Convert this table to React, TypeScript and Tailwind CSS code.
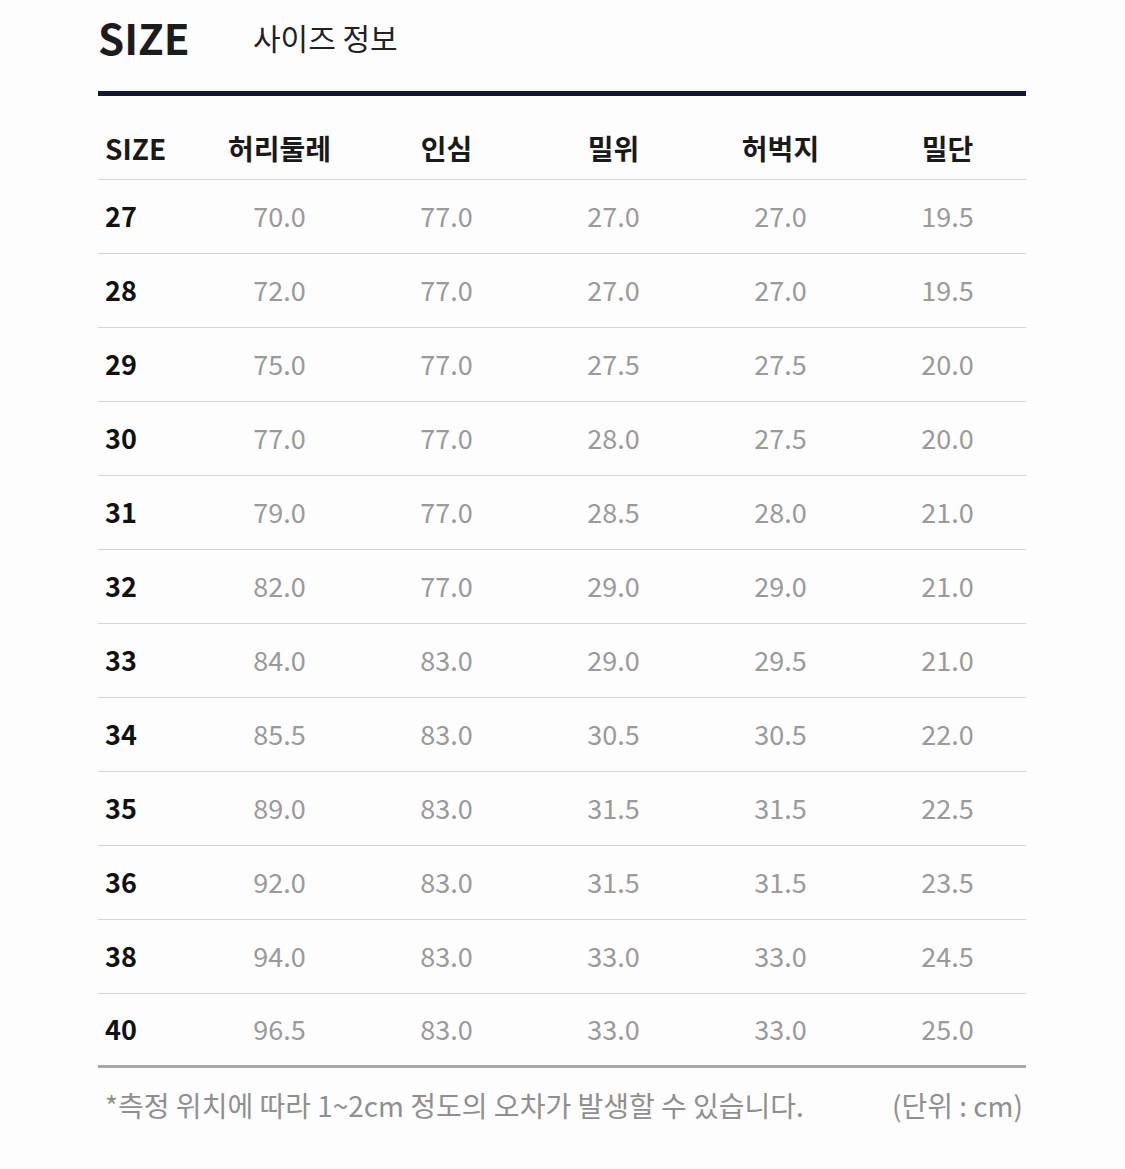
const headers = ["허리둘레", "인심", "밀위", "허벅지", "밀단"];

const rows: [string, string[]][] = [
  ["27", ["70.0", "77.0", "27.0", "27.0", "19.5"]],
  ["28", ["72.0", "77.0", "27.0", "27.0", "19.5"]],
  ["29", ["75.0", "77.0", "27.5", "27.5", "20.0"]],
  ["30", ["77.0", "77.0", "28.0", "27.5", "20.0"]],
  ["31", ["79.0", "77.0", "28.5", "28.0", "21.0"]],
  ["32", ["82.0", "77.0", "29.0", "29.0", "21.0"]],
  ["33", ["84.0", "83.0", "29.0", "29.5", "21.0"]],
  ["34", ["85.5", "83.0", "30.5", "30.5", "22.0"]],
  ["35", ["89.0", "83.0", "31.5", "31.5", "22.5"]],
  ["36", ["92.0", "83.0", "31.5", "31.5", "23.5"]],
  ["38", ["94.0", "83.0", "33.0", "33.0", "24.5"]],
  ["40", ["96.5", "83.0", "33.0", "33.0", "25.0"]],
];

const font = { fontFamily: '"Noto Sans CJK KR", "Noto Sans", sans-serif' };

export default function App() {
  return (
    <div className="min-h-[1169px] w-[1125px] bg-[#fdfdfd] text-[#222]" style={font}>
      <div className="ml-[98px] w-[928px] pt-[12px]">
        <div className="flex h-[50px] items-center">
          <h1 className="w-[155px] text-[42px] font-bold leading-none text-[#1c1c1c]">
            SIZE
          </h1>
          <span className="text-[30px] leading-none text-[#222]">사이즈 정보</span>
        </div>
        <div className="mt-[29px] h-[5px] bg-[#16163a]" />

        <div className="mt-[22px] grid h-[62px] grid-cols-[98px_repeat(5,167px)] items-center border-b border-[#d6d6d6] pb-[2px]">
          <div className="pl-[7px] text-[28px] font-bold text-[#1a1a1a]">SIZE</div>
          {headers.map((h) => (
            <div key={h} className="text-center text-[28px] font-bold text-[#1a1a1a]">
              {h}
            </div>
          ))}
        </div>

        {rows.map(([size, vals], i) => (
          <div
            key={size}
            className={`grid h-[74px] grid-cols-[98px_repeat(5,167px)] items-center ${
              i === rows.length - 1 ? "border-b-[3px] border-[#a9a9a9]" : "border-b border-[#d6d6d6]"
            }`}
          >
            <div className="pl-[7px] text-[27px] font-bold text-[#111]">{size}</div>
            {vals.map((v, j) => (
              <div key={j} className="text-center text-[27px] text-[#9a9a9a]">
                {v}
              </div>
            ))}
          </div>
        ))}

        <div className="mt-[16px] flex items-center justify-between pl-[7px] pr-[3px] text-[28px] text-[#8f8f8f]">
          <span>*측정 위치에 따라 1~2cm 정도의 오차가 발생할 수 있습니다.</span>
          <span>(단위 : cm)</span>
        </div>
      </div>
    </div>
  );
}
